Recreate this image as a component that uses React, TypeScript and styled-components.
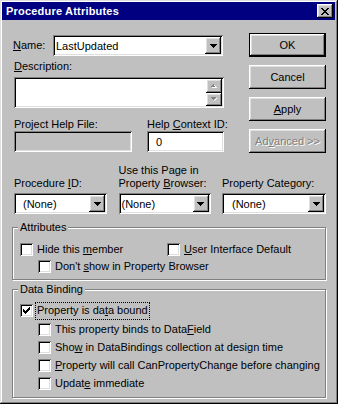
import React from 'react';
import styled, { createGlobalStyle } from 'styled-components';

const GlobalStyle = createGlobalStyle`
  html, body {
    margin: 0;
    padding: 0;
    background: #c0c0c0;
  }
  body {
    font-family: "Liberation Sans", Arial, sans-serif;
    font-size: 11px;
    color: #000;
  }
`;

const raised = `box-shadow: inset -1px -1px #000, inset 1px 1px #fff, inset -2px -2px #808080, inset 2px 2px #dfdfdf;`;
const sunken = `box-shadow: inset 1px 1px #808080, inset -1px -1px #fff, inset 2px 2px #000, inset -2px -2px #dfdfdf;`;

const Window = styled.div`
  box-sizing: border-box;
  width: 338px;
  height: 404px;
  padding: 2px 3px 2px 2px;
  background: #c0c0c0;
  box-shadow: inset -1px -1px #000, inset 1px 1px #dfdfdf, inset -2px -2px #808080, inset 2px 2px #fff;
  display: flex;
  flex-direction: column;
`;

const TitleBar = styled.div`
  height: 18px;
  flex-shrink: 0;
  background: #000080;
  color: #fff;
  display: flex;
  align-items: center;
  justify-content: space-between;
  padding: 0 2px 0 4px;
`;

const Title = styled.span`
  font-weight: bold;
  font-size: 11px;
  letter-spacing: 0.2px;
`;

const CloseButton = styled.div`
  box-sizing: border-box;
  width: 16px;
  height: 14px;
  background: #c0c0c0;
  ${raised}
  display: flex;
  align-items: center;
  justify-content: center;
  padding-right: 1px;
`;

const Body = styled.div`
  display: flex;
  flex-direction: column;
  padding: 13px 9px 0 10px;
`;

const TopSection = styled.div`
  display: flex;
  padding-left: 2px;
`;

const LeftCol = styled.div`
  width: 210px;
  display: flex;
  flex-direction: column;
`;

const NameRow = styled.div`
  display: flex;
  align-items: center;
  margin-top: 2px;
`;

const NameLabel = styled.span`
  width: 40px;
  margin-left: -1px;
  line-height: 13px;
`;

const Label = styled.div<{ $mt?: number }>`
  line-height: 13px;
  margin-top: ${p => p.$mt ?? 0}px;
  white-space: nowrap;
`;

const ComboBox = styled.div<{ $w: number }>`
  box-sizing: border-box;
  width: ${p => p.$w}px;
  height: 21px;
  background: #fff;
  ${sunken}
  display: flex;
  align-items: center;
  padding: 2px;
`;

const ComboText = styled.span<{ $indent: number }>`
  flex: 1;
  padding-left: ${p => p.$indent}px;
  white-space: nowrap;
  overflow: hidden;
`;

const DropButton = styled.div`
  box-sizing: border-box;
  width: 16px;
  height: 17px;
  background: #c0c0c0;
  ${raised}
  display: flex;
  align-items: center;
  justify-content: center;
`;

const MemoBox = styled.div`
  box-sizing: border-box;
  width: 210px;
  height: 31px;
  margin-top: 4px;
  background: #fff;
  ${sunken}
  padding: 2px;
  display: flex;
  justify-content: flex-end;
`;

const ScrollCol = styled.div`
  width: 16px;
  display: flex;
  flex-direction: column;
`;

const ScrollButton = styled.div`
  flex: 1;
  background: #c0c0c0;
  ${raised}
  display: flex;
  align-items: center;
  justify-content: center;
`;

const HelpRow = styled.div`
  display: grid;
  grid-template-columns: 118px 77px;
  column-gap: 15px;
  margin-top: 10px;
`;

const TextBox = styled.div<{ $disabled?: boolean; $indent?: number }>`
  box-sizing: border-box;
  height: 21px;
  background: ${p => (p.$disabled ? '#c0c0c0' : '#fff')};
  ${sunken}
  display: flex;
  align-items: center;
  padding-left: ${p => p.$indent ?? 3}px;
`;

const ButtonCol = styled.div`
  margin-left: 25px;
  display: flex;
  flex-direction: column;
  gap: 8px;
`;

const Button = styled.div<{ $default?: boolean; $disabled?: boolean }>`
  box-sizing: border-box;
  width: 77px;
  height: 24px;
  background: #c0c0c0;
  border: ${p => (p.$default ? '1px solid #000' : 'none')};
  ${raised}
  display: flex;
  align-items: center;
  justify-content: center;
  color: ${p => (p.$disabled ? '#808080' : '#000')};
  text-shadow: ${p => (p.$disabled ? '1px 1px #fff' : 'none')};
`;

const ComboRow = styled.div`
  display: grid;
  grid-template-columns: 93px 92px 104px;
  justify-content: space-between;
  align-items: end;
  margin: 11px 0 0 2px;
`;

const Field = styled.div`
  display: flex;
  flex-direction: column;
  gap: 3px;
`;

const Group = styled.div<{ $mt: number; $pt: number; $pb: number }>`
  position: relative;
  box-sizing: border-box;
  width: 314px;
  margin-top: ${p => p.$mt}px;
  border: 1px solid #808080;
  box-shadow: inset 1px 1px #fff, 1px 1px #fff;
  padding: ${p => p.$pt}px 0 ${p => p.$pb}px 7px;
`;

const Caption = styled.span`
  position: absolute;
  top: -7px;
  left: 5px;
  padding: 0 2px;
  line-height: 13px;
  background: #c0c0c0;
`;

const CheckRow = styled.div<{ $h: number; $indent?: number }>`
  display: flex;
  align-items: center;
  height: ${p => p.$h}px;
  padding-left: ${p => p.$indent ?? 0}px;
`;

const AttrRow = styled.div`
  display: grid;
  grid-template-columns: 147px auto;
`;

const Box = styled.div`
  box-sizing: border-box;
  width: 13px;
  height: 13px;
  flex-shrink: 0;
  background: #fff;
  ${sunken}
  display: flex;
  align-items: center;
  justify-content: center;
`;

const CheckText = styled.span<{ $focus?: boolean }>`
  margin-left: ${p => (p.$focus ? 3 : 4)}px;
  padding: ${p => (p.$focus ? '1px 1px 2px 1px' : '0')};
  outline: ${p => (p.$focus ? '1px dotted #000' : 'none')};
  line-height: 13px;
  white-space: nowrap;
`;

const CloseGlyph = () => (
  <svg width="8" height="7" viewBox="0 0 8 7" shapeRendering="crispEdges">
    <path
      fill="#000"
      d="M0 0h2v1H0zM6 0h2v1H6zM1 1h2v1H1zM5 1h2v1H5zM2 2h4v1H2zM3 3h2v1H3zM2 4h4v1H2zM1 5h2v1H1zM5 5h2v1H5zM0 6h2v1H0zM6 6h2v1H6z"
    />
  </svg>
);

const DownArrow = () => (
  <svg width="7" height="4" viewBox="0 0 7 4" shapeRendering="crispEdges">
    <path fill="#000" d="M0 0h7v1H0zM1 1h5v1H1zM2 2h3v1H2zM3 3h1v1H3z" />
  </svg>
);

const SmallArrow = ({ up }: { up?: boolean }) => (
  <svg width="6" height="4" viewBox="0 0 6 4" shapeRendering="crispEdges">
    {up ? (
      <>
        <path fill="#fff" d="M3 1h1v1H3zM4 2h1v1H4zM1 3h5v1H1z" />
        <path fill="#808080" d="M2 0h1v1H2zM1 1h2v1H1zM0 2h4v1H0z" />
      </>
    ) : (
      <>
        <path fill="#fff" d="M5 1h1v1H5zM4 2h1v1H4zM3 3h1v1H3z" />
        <path fill="#808080" d="M0 0h5v1H0zM1 1h3v1H1zM2 2h1v1H2z" />
      </>
    )}
  </svg>
);

const CheckMark = () => (
  <svg width="7" height="7" viewBox="0 0 7 7" shapeRendering="crispEdges">
    <path
      fill="#000"
      d="M6 0h1v1H6zM5 1h2v1H5zM0 2h1v1H0zM4 2h3v1H4zM0 3h2v1H0zM3 3h3v1H3zM0 4h5v1H0zM1 5h3v1H1zM2 6h1v1H2z"
    />
  </svg>
);

function Combo({ w, text, indent = 1 }: { w: number; text: string; indent?: number }) {
  return (
    <ComboBox $w={w}>
      <ComboText $indent={indent}>{text}</ComboText>
      <DropButton>
        <DownArrow />
      </DropButton>
    </ComboBox>
  );
}

function Check({ checked, children }: { checked?: boolean; children: React.ReactNode }) {
  return (
    <>
      <Box>{checked && <CheckMark />}</Box>
      <CheckText $focus={checked}>{children}</CheckText>
    </>
  );
}

export default function App() {
  return (
    <>
      <GlobalStyle />
      <Window>
        <TitleBar>
          <Title>Procedure Attributes</Title>
          <CloseButton>
            <CloseGlyph />
          </CloseButton>
        </TitleBar>

        <Body>
          <TopSection>
            <LeftCol>
              <NameRow>
                <NameLabel>
                  <u>N</u>ame:
                </NameLabel>
                <Combo w={170} text="LastUpdated" />
              </NameRow>

              <Label $mt={4}>
                <u>D</u>escription:
              </Label>
              <MemoBox>
                <ScrollCol>
                  <ScrollButton>
                    <SmallArrow up />
                  </ScrollButton>
                  <ScrollButton>
                    <SmallArrow />
                  </ScrollButton>
                </ScrollCol>
              </MemoBox>

              <HelpRow>
                <Label>Project Help File:</Label>
                <Label>
                  Help <u>C</u>ontext ID:
                </Label>
                <TextBox $disabled />
                <TextBox $indent={9}>0</TextBox>
              </HelpRow>
            </LeftCol>

            <ButtonCol>
              <Button $default>OK</Button>
              <Button>Cancel</Button>
              <Button>
                <span>
                  <u>A</u>pply
                </span>
              </Button>
              <Button $disabled>
                <span>
                  Ad<u>v</u>anced &gt;&gt;
                </span>
              </Button>
            </ButtonCol>
          </TopSection>

          <ComboRow>
            <Field>
              <Label>
                Procedure <u>I</u>D:
              </Label>
              <Combo w={93} text="(None)" indent={7} />
            </Field>
            <Field>
              <Label>
                Use this Page in
                <br />
                Property <u>B</u>rowser:
              </Label>
              <Combo w={92} text="(None)" />
            </Field>
            <Field>
              <Label>
                Property Cate<u>g</u>ory:
              </Label>
              <Combo w={104} text="(None)" indent={8} />
            </Field>
          </ComboRow>

          <Group $mt={13} $pt={13} $pb={4}>
            <Caption>Attributes</Caption>
            <AttrRow>
              <CheckRow $h={17}>
                <Check>
                  Hide this <u>m</u>ember
                </Check>
              </CheckRow>
              <CheckRow $h={17}>
                <Check>
                  <u>U</u>ser Interface Default
                </Check>
              </CheckRow>
            </AttrRow>
            <CheckRow $h={17} $indent={18}>
              <Check>
                Don't <u>s</u>how in Property Browser
              </Check>
            </CheckRow>
          </Group>

          <Group $mt={9} $pt={11} $pb={5}>
            <Caption>Data Binding</Caption>
            <CheckRow $h={19}>
              <Check checked>
                Property is da<u>t</u>a bound
              </Check>
            </CheckRow>
            <CheckRow $h={18} $indent={18}>
              <Check>
                This property binds to Data<u>F</u>ield
              </Check>
            </CheckRow>
            <CheckRow $h={18} $indent={18}>
              <Check>
                Sho<u>w</u> in DataBindings collection at design time
              </Check>
            </CheckRow>
            <CheckRow $h={18} $indent={18}>
              <Check>
                <u>P</u>roperty will call CanPropertyChange before changing
              </Check>
            </CheckRow>
            <CheckRow $h={18} $indent={18}>
              <Check>
                Updat<u>e</u> immediate
              </Check>
            </CheckRow>
          </Group>
        </Body>
      </Window>
    </>
  );
}
